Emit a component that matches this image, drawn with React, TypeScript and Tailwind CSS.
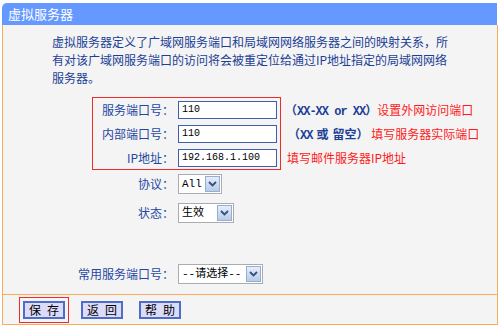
import React from 'react';

type SelectProps = { value: string; width: string };

// 模拟旧式 IE 下拉框
const FakeSelect: React.FC<SelectProps> = ({ value, width }) => (
  <div className={`flex h-[20px] items-center border border-[#a9adb3] bg-white ${width}`}>
    <span className="flex-1 pl-[3px] text-[11px] leading-[18px] text-black whitespace-nowrap overflow-hidden font-['Liberation_Mono','Noto_Sans_CJK_SC',monospace]">
      {value}
    </span>
    <span className="mr-[1px] flex h-[16px] w-[15px] shrink-0 items-center justify-center border border-[#98aecf] bg-gradient-to-b from-[#e6eefa] to-[#b8cbe8]">
      <svg width="9" height="6" viewBox="0 0 9 6">
        <path d="M1 1l3.5 3.5L8 1" stroke="#34507e" strokeWidth="1.8" fill="none" />
      </svg>
    </span>
  </div>
);

const Btn: React.FC<{ label: string }> = ({ label }) => (
  <button className="flex h-[18px] w-[42px] items-center justify-center whitespace-nowrap border-2 border-[#4f6cc8] bg-[#dcdcfa] text-[12px] leading-[14px] text-black tracking-[6px] pl-[6px]">
    {label}
  </button>
);

const App: React.FC = () => {
  return (
    <div className="w-[500px] h-[329px] bg-white pt-[3px] px-[2px] font-['Noto_Sans_CJK_SC','Liberation_Sans',sans-serif]">
      {/* 标题栏 */}
      <div className="h-[22px] w-[495px] bg-[#6699ff] rounded-tl-[5px] flex items-center pl-[6px] text-white text-[13px]">
        虚拟服务器
      </div>

      {/* 主体 */}
      <div className="w-[496px] bg-[#f4f4f4] border-x border-[#fbab5c] pt-[8px] pb-[10px]">
        <p className="pl-[49px] text-[12px] leading-[18px] text-[#1c3e96] whitespace-nowrap">
          虚拟服务器定义了广域网服务端口和局域网网络服务器之间的映射关系，所<br />
          有对该广域网服务端口的访问将会被重定位给通过IP地址指定的局域网网络<br />
          服务器。
        </p>

        <div className="pl-[89px] mt-[10px]">
          <div className="flex items-start">
            {/* 红框内的三行 */}
            <div className="border border-[#ee2a2a] pt-[3px] pb-[2px] pr-[3px] flex flex-col gap-[6px]">
              {[
                ['服务端口号：', '110'],
                ['内部端口号：', '110'],
                ['IP地址：', '192.168.1.100'],
              ].map(([label, val]) => (
                <div key={label} className="flex items-center h-[18px]">
                  <span className="w-[81px] text-right text-[12px] leading-[18px] text-[#1f47a3]">{label}</span>
                  <div className="ml-[4px] w-[99px] h-[18px] border border-[#3f5eae] bg-white pl-[3px] text-[10px] leading-[16px] text-black font-['Liberation_Mono',monospace]">
                    {val}
                  </div>
                </div>
              ))}
            </div>

            {/* 右侧说明 */}
            <div className="ml-[4px] pt-[4px] flex flex-col gap-[6px] text-[12px] whitespace-nowrap">
              <div className="h-[18px] leading-[18px]">
                <span className="text-[#1c3e96] font-bold">
                  （<span className="text-[12px] tracking-[-1px] font-['Liberation_Mono',monospace]">XX-XX or XX</span>）
                </span>
                <span className="text-[#ff1a1a]">设置外网访问端口</span>
              </div>
              <div className="h-[18px] leading-[18px] pl-[3px]">
                <span className="text-[#1c3e96] font-bold">
                  （<span className="text-[12px] tracking-[-1px] font-['Liberation_Mono',monospace]">XX</span>
                  <span className="px-[4px]">或</span>留空）
                </span>
                <span className="text-[#ff1a1a]"> 填写服务器实际端口</span>
              </div>
              <div className="h-[18px] leading-[18px] pl-[2px] text-[#ff1a1a]">填写邮件服务器IP地址</div>
            </div>
          </div>

          <div className="flex items-center mt-[4px] pl-[1px]">
            <span className="w-[81px] text-right text-[12px] text-[#1f47a3]">协议：</span>
            <div className="ml-[4px]">
              <FakeSelect value="All" width="w-[44px]" />
            </div>
          </div>

          <div className="flex items-center mt-[9px] pl-[1px]">
            <span className="w-[81px] text-right text-[12px] text-[#1f47a3]">状态：</span>
            <div className="ml-[4px]">
              <FakeSelect value="生效" width="w-[56px]" />
            </div>
          </div>

          <div className="flex items-center mt-[41px] pl-[1px]">
            <span className="w-[81px] text-right text-[12px] text-[#1f47a3] whitespace-nowrap flex justify-end">常用服务端口号：</span>
            <div className="ml-[4px]">
              <FakeSelect value="--请选择--" width="w-[85px]" />
            </div>
          </div>
        </div>
      </div>

      {/* 按钮栏 */}
      <div className="w-[496px] bg-[#f4f4f4] border border-[#fbab5c] pt-[2px] pb-[1px] pl-[16px] flex items-center">
        <div className="flex border border-[#ee2a2a] p-[3px]">
          <Btn label="保存" />
        </div>
        <div className="flex ml-[12px]">
          <Btn label="返回" />
        </div>
        <div className="flex ml-[16px]">
          <Btn label="帮助" />
        </div>
      </div>
    </div>
  );
};

export default App;
